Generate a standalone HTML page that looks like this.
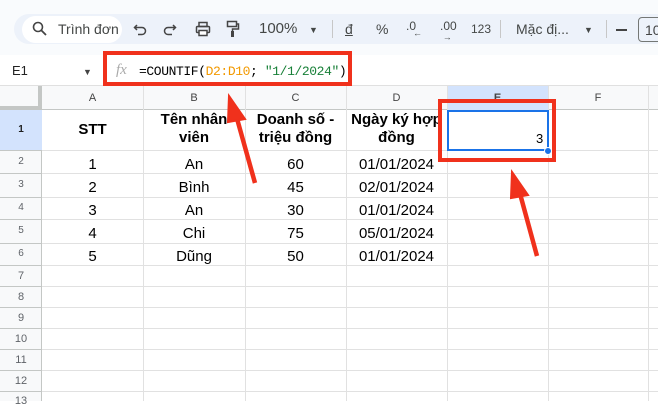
<!DOCTYPE html><html><head><meta charset="utf-8"><style>
*{margin:0;padding:0;box-sizing:border-box}
body{width:658px;height:401px;overflow:hidden;background:#fff;font-family:"Liberation Sans","Noto Sans CJK SC",sans-serif;position:relative;color:#000}
.a{position:absolute}
.tb{left:0;top:0;width:658px;height:55px;background:#f9fbfd}
.pill{left:14px;top:14px;width:700px;height:30px;background:#edf2fa;border-radius:16px}
.t{font-size:14px;color:#444746;top:21px}
.c{position:absolute;text-align:center;font-size:15px;line-height:18px}
.rn{position:absolute;left:0;width:42px;text-align:center;font-size:10px;color:#5f6368}
.ch{position:absolute;top:86px;height:24px;text-align:center;font-size:11px;color:#444;line-height:24px}
</style></head><body>
<div class="a tb"></div>
<div class="a pill"></div>
<div class="a" style="left:22px;top:16px;width:100px;height:27px;background:#fff;border-radius:14px;overflow:hidden"></div>
<svg class="a" style="left:32px;top:21px" width="16" height="16"><circle cx="6" cy="6" r="4.5" fill="none" stroke="#444" stroke-width="1.6"/><path d="M9.5 9.5L14 14" stroke="#444" stroke-width="1.8"/></svg>
<div class="a" style="left:58px;top:21px;width:62px;overflow:hidden;white-space:nowrap;font-size:14px;color:#444746">Trình đơn</div>
<svg class="a" style="left:133px;top:22px" width="14" height="14"><path d="M4 3L1.5 5.5L4 8M1.5 5.5H9a3.5 3.5 0 0 1 0 7H5" fill="none" stroke="#444" stroke-width="1.5"/></svg>
<svg class="a" style="left:163px;top:22px" width="14" height="14"><path d="M10 3L12.5 5.5L10 8M12.5 5.5H5a3.5 3.5 0 0 0 0 7H9" fill="none" stroke="#444" stroke-width="1.5"/></svg>
<svg class="a" style="left:195px;top:21px" width="16" height="16"><rect x="4" y="1.5" width="8" height="4" fill="none" stroke="#444" stroke-width="1.5"/><rect x="1.5" y="5.5" width="13" height="6" rx="1" fill="none" stroke="#444" stroke-width="1.5"/><rect x="4" y="9.5" width="8" height="5" fill="#fff" stroke="#444" stroke-width="1.5"/></svg>
<svg class="a" style="left:226px;top:20px" width="14" height="18"><rect x="1.5" y="1.5" width="9" height="5" fill="none" stroke="#444" stroke-width="1.5"/><path d="M10.5 4H12.5V9H6.5V11" fill="none" stroke="#444" stroke-width="1.5"/><rect x="5" y="11" width="3" height="6" fill="#444"/></svg>
<div class="a t" style="left:259px;font-size:15px;top:20px">100%</div>
<div class="a t" style="left:309px;font-size:9px;top:25px">▼</div>
<div class="a" style="left:332px;top:20px;width:1px;height:18px;background:#c7c7c7"></div>
<div class="a t" style="left:345px;text-decoration:underline">đ</div>
<div class="a t" style="left:376px">%</div>
<div class="a t" style="left:406px;font-size:12px;top:19px">.0<span style="font-size:9px;position:relative;top:6px;left:-3px">←</span></div>
<div class="a t" style="left:440px;font-size:12px;top:19px">.00<span style="font-size:9px;position:relative;top:10px;left:-14px">→</span></div>
<div class="a t" style="left:471px;font-size:12px;top:22px">123</div>
<div class="a" style="left:500px;top:20px;width:1px;height:18px;background:#c7c7c7"></div>
<div class="a t" style="left:516px">Mặc đị...</div>
<div class="a t" style="left:584px;font-size:9px;top:25px">▼</div>
<div class="a" style="left:606px;top:20px;width:1px;height:18px;background:#c7c7c7"></div>
<div class="a" style="left:616px;top:29px;width:11px;height:2px;background:#444"></div>
<div class="a" style="left:638px;top:17px;width:40px;height:25px;border:1px solid #747775;border-radius:4px;font-size:14px;padding:4px 0 0 6px;color:#444">10</div>
<div class="a" style="left:0;top:55px;width:658px;height:31px;background:#fff;border-bottom:1px solid #e0e0e0"></div>
<div class="a" style="left:12px;top:63px;font-size:13px;color:#222">E1</div>
<div class="a" style="left:83px;top:67px;font-size:9px;color:#444">▼</div>
<div class="a" style="left:116px;top:62px;font-size:15px;font-style:italic;color:#aaa;font-family:'Liberation Serif',serif">fx</div>
<div class="a" style="left:139px;top:64px;font-size:13px;font-family:'Liberation Mono',monospace;letter-spacing:-0.4px">=COUNTIF(<span style="color:#f29900">D2:D10</span>; <span style="color:#188038">"1/1/2024"</span>)</div>
<div class="a" style="left:103px;top:51px;width:249px;height:35px;border:4px solid #f0311c"></div>
<div class="a" style="left:0;top:86px;width:658px;height:24px;background:#f8f9fa;border-bottom:1px solid #c4c7c5"></div>
<div class="a" style="left:0;top:86px;width:42px;height:315px;background:#f8f9fa;border-right:1px solid #c4c7c5"></div>
<div class="a" style="left:0;top:86px;width:42px;height:24px;border-right:4px solid #c4c7c5;border-bottom:4px solid #c4c7c5"></div>
<div class="a" style="left:447px;top:86px;width:101px;height:24px;background:#d3e3fd"></div>
<div class="a" style="left:0;top:110px;width:42px;height:40px;background:#d3e3fd"></div>
<svg class="a" style="left:0;top:0" width="658" height="401">
<g stroke="#e1e1e1" stroke-width="1">
<path d="M143.5 86V401M245.5 86V401M346.5 86V401M447.5 86V401M548.5 86V401M648.5 86V401"/>
<path d="M42 150.5H658M42 173.5H658M42 197.5H658M42 219.5H658M42 243.5H658M42 265.5H658M42 286.5H658M42 307.5H658M42 328.5H658M42 349.5H658M42 370.5H658M42 391.5H658"/>
<path d="M0 150.5H42M0 173.5H42M0 197.5H42M0 219.5H42M0 243.5H42M0 265.5H42M0 286.5H42M0 307.5H42M0 328.5H42M0 349.5H42M0 370.5H42M0 391.5H42" stroke="#c4c7c5"/>
</g></svg>
<div class="ch" style="left:42px;width:101px">A</div>
<div class="ch" style="left:143px;width:102px">B</div>
<div class="ch" style="left:245px;width:101px">C</div>
<div class="ch" style="left:346px;width:101px">D</div>
<div class="ch" style="left:447px;width:101px;font-weight:bold">E</div>
<div class="ch" style="left:548px;width:100px">F</div>
<div class="rn" style="top:124px;color:#1f1f1f;font-weight:bold">1</div>
<div class="rn" style="top:156px">2</div><div class="rn" style="top:179px">3</div><div class="rn" style="top:202px">4</div><div class="rn" style="top:225px">5</div><div class="rn" style="top:248px">6</div>
<div class="rn" style="top:270px;font-size:11px">7</div><div class="rn" style="top:291px;font-size:11px">8</div><div class="rn" style="top:312px;font-size:11px">9</div><div class="rn" style="top:333px;font-size:11px">10</div><div class="rn" style="top:354px;font-size:11px">11</div><div class="rn" style="top:375px;font-size:11px">12</div><div class="rn" style="top:395px;font-size:11px">13</div>
<div style="font-weight:bold">
<div class="c" style="left:42px;width:101px;top:121px">STT</div>
<div class="c" style="left:143px;width:102px;top:111px">Tên nhân<br>viên</div>
<div class="c" style="left:245px;width:101px;top:111px">Doanh số -<br>triệu đồng</div>
<div class="c" style="left:346px;width:101px;top:111px;white-space:nowrap;overflow:hidden">Ngày ký hợp<br>đồng</div>
</div>
<div class="c" style="left:42px;width:101px;top:153px;line-height:23px">1<br>2<br>3<br>4<br>5</div>
<div class="c" style="left:143px;width:102px;top:153px;line-height:23px">An<br>Bình<br>An<br>Chi<br>Dũng</div>
<div class="c" style="left:245px;width:101px;top:153px;line-height:23px">60<br>45<br>30<br>75<br>50</div>
<div class="c" style="left:346px;width:101px;top:153px;line-height:23px">01/01/2024<br>02/01/2024<br>01/01/2024<br>05/01/2024<br>01/01/2024</div>
<div class="a" style="left:447px;top:110px;width:102px;height:41px;border:2px solid #1a73e8"></div>
<div class="a" style="left:536px;top:131px;font-size:13px">3</div>
<div class="a" style="left:544px;top:147px;width:8px;height:8px;border-radius:50%;background:#1a73e8;border:1px solid #fff"></div>
<div class="a" style="left:438px;top:99px;width:118px;height:63px;border:4px solid #f0311c"></div>
<svg class="a" style="left:0;top:0" width="658" height="401">
<path d="M255 183L236 115" stroke="#f0311c" stroke-width="4.5"/><path d="M229 96L245 119L228 122Z" fill="#f0311c" stroke="#f0311c" stroke-width="2"/>
<path d="M537 256L519 190" stroke="#f0311c" stroke-width="4.5"/><path d="M512 172L528 195L511 198Z" fill="#f0311c" stroke="#f0311c" stroke-width="2"/>
</svg>
</body></html>
